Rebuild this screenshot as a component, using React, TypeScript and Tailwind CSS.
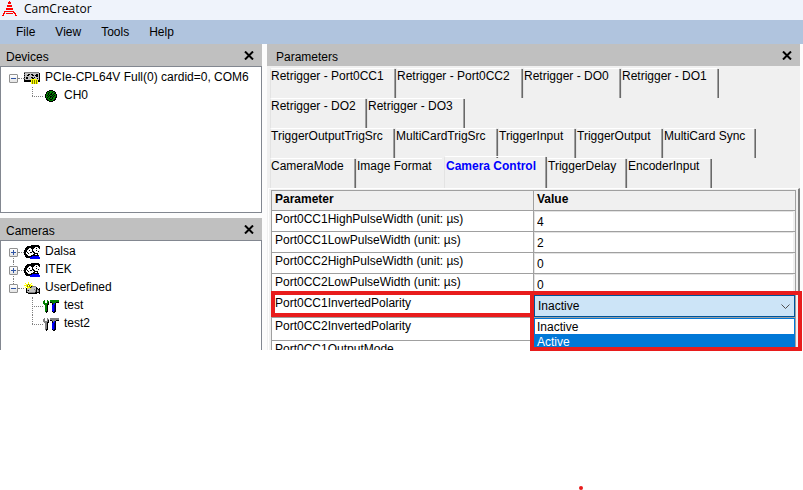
import { useState, type ReactNode } from "react";

const FONT = "font-['Liberation_Sans',Arial,sans-serif]";

const COLORS: Record<string, string> = {
  k: "#000000",
  d: "#404040",
  g: "#808080",
  l: "#c0c0c0",
  w: "#ffffff",
  y: "#ffff00",
  o: "#808000",
  b: "#0000ff",
  n: "#000080",
  e: "#008000",
  r: "#ff0000",
};

function Pixels({ rows, className = "" }: { rows: string[]; className?: string }) {
  return (
    <svg
      width={rows[0].length}
      height={rows.length}
      viewBox={`0 0 ${rows[0].length} ${rows.length}`}
      shapeRendering="crispEdges"
      className={`shrink-0 ${className}`}
      aria-hidden="true"
    >
      {rows.flatMap((row, y) =>
        row.split("").map((c, x) =>
          COLORS[c] ? <rect key={`${x}-${y}`} x={x} y={y} width={1} height={1} fill={COLORS[c]} /> : null,
        ),
      )}
    </svg>
  );
}

const LOGO = [
  ".......r........",
  "......rrr.......",
  "......rrr.......",
  "................",
  ".....rrrrr......",
  ".....rrrrr......",
  "................",
  "....rrrrrrr.....",
  "....rrrrrrr.....",
  "................",
  "..rrrrrrrrrr....",
  "..r........rr...",
  ".rr.rrrrrrr.rr..",
  ".r...........r..",
  "rr...........rr.",
];

const BOARD = [
  "ggggggggggggggg.",
  "kllllllllllllllk",
  "glllkklkklllkklk",
  "kllkklllkklkkklk",
  "glllllllllllkklk",
  "klkklllkklkllllk",
  "glkkllllkklllklk",
  "kllllllyyyyyyllk",
  "kkkkkkkyoyoyoykk",
  "kkkkkkkyoyoyoykk",
  ".......yoyoyoy..",
  ".......yoyoyoy..",
];

const HEADS = [
  ".......kkkkkkkk.",
  "...kkkkkkkkkkkkk",
  "..kkkkkkkkkwwwkk",
  ".kkkkwwkkkwwkwwk",
  ".kkkwwwwkwwwwww.",
  "kkkwwkwwkwwwkww.",
  "kkkwwwwwkkwwwwk.",
  "kkwkwwkkwkkwww..",
  "kkwwkwwwwwkkkk..",
  "kkkwwwwwwkkwwk..",
  ".kkkwwwkkkkkkkk.",
  ".kkkkkkkbbbbbbb.",
  "..kkkkbbbbbbbbbb",
  "......bbbbbbbbbb",
];

const CAMCORDER = [
  "....y...........",
  ".y..y..y........",
  "..yyoyy.........",
  "yyyowoyyy.......",
  "..yoyoykgggg....",
  ".y.yyykgllllk...",
  "..kyllylllllkk.k",
  "..klllllllglkgkk",
  "..kgkllllllgklgk",
  "..kllllllllgklgk",
  "..kkgggggggkkkkk",
  "....kkkkkkkkk..k",
];

const TOOLS_GREEN = [
  ".e..e..eeeeeeeee",
  "ee..ee.eeeeeeeee",
  "ee..ek.kkeeeekkk",
  "eeeeek...kebk...",
  ".eeekk...kbbk...",
  "..eek....bbnk...",
  "..eek....bbnk...",
  "..eek....bbnk...",
  "..eek....bbnk...",
  "..eek....bbnk...",
  "..eek....bbnk...",
  "..ekk....kbkk...",
  "...k......kk....",
];

const TOOLS_GREY = TOOLS_GREEN.map((row) => row.replace(/e/g, "g"));

const CHANNEL = [
  "....kkkk....",
  "..kkeeeekk..",
  ".keekeekeek.",
  ".kekeekeekk.",
  "keekekkekeek",
  "kekekeekekek",
  "keekekkekeek",
  "kekeekekeekk",
  ".keekeekeek.",
  ".kkeekkeekk.",
  "..kkeeeekk..",
  "....kkkk....",
];

function Expander({ open }: { open: boolean }) {
  return (
    <button
      type="button"
      aria-label={open ? "Collapse" : "Expand"}
      className="relative h-[9px] w-[9px] shrink-0 rounded-[1px] border border-[#919191] bg-gradient-to-b from-white to-[#e4e4e4]"
    >
      <span className="absolute top-[3px] left-px h-px w-[5px] bg-[#3055a5]" />
      {!open && <span className="absolute top-px left-[3px] h-[5px] w-px bg-[#3055a5]" />}
    </button>
  );
}

function Branch({ open, icon, label, line = "" }: { open: boolean; icon: string[]; label: string; line?: string }) {
  return (
    <div className="relative flex h-[18px] items-center pl-2">
      {line && <span className={`absolute left-3 border-l border-dotted border-[#808080] ${line}`} />}
      <Expander open={open} />
      <span className="w-[6px] shrink-0 border-t border-dotted border-[#808080]" />
      <Pixels rows={icon} />
      <span className="pb-[2px] pl-[5px] whitespace-nowrap">{label}</span>
    </div>
  );
}

function Leaf({ icon, label, last = true }: { icon: string[]; label: string; last?: boolean }) {
  return (
    <div className="relative flex h-[18px] items-center pl-[31px]">
      <span
        className={`absolute top-0 left-[31px] border-l border-dotted border-[#808080] ${last ? "h-[9px]" : "h-[18px]"}`}
      />
      <span className="w-[11px] shrink-0 border-t border-dotted border-[#808080]" />
      <span className="flex w-4 shrink-0 justify-center">
        <Pixels rows={icon} />
      </span>
      <span className="pb-[2px] pl-[5px] whitespace-nowrap">{label}</span>
    </div>
  );
}

function PanelHeader({ title, pad = "pl-[6px]" }: { title: string; pad?: string }) {
  return (
    <header className={`flex h-[22px] shrink-0 items-center justify-between bg-[#c0c0c0] pr-2 ${pad}`}>
      <h2 className="pt-[3px]">{title}</h2>
      <button
        type="button"
        aria-label={`Close ${title}`}
        className="flex h-[11px] w-[11px] items-center justify-center"
      >
        <svg width="10" height="9" viewBox="0 0 10 9" aria-hidden="true">
          <path d="M1 0.5 L9 8.5 M9 0.5 L1 8.5" stroke="#000" strokeWidth="2" />
        </svg>
      </button>
    </header>
  );
}

const TAB_ROWS: { label: string; width: string }[][] = [
  [
    { label: "Retrigger - Port0CC1", width: "w-[126px]" },
    { label: "Retrigger - Port0CC2", width: "w-[127px]" },
    { label: "Retrigger - DO0", width: "w-[98px]" },
    { label: "Retrigger - DO1", width: "w-[98px]" },
  ],
  [
    { label: "Retrigger - DO2", width: "w-[97px]" },
    { label: "Retrigger - DO3", width: "w-[98px]" },
  ],
  [
    { label: "TriggerOutputTrigSrc", width: "w-[125px]" },
    { label: "MultiCardTrigSrc", width: "w-[103px]" },
    { label: "TriggerInput", width: "w-[78px]" },
    { label: "TriggerOutput", width: "w-[87px]" },
    { label: "MultiCard Sync", width: "w-[93px]" },
  ],
  [
    { label: "CameraMode", width: "w-[86px]" },
    { label: "Image Format", width: "w-[88px]" },
    { label: "Camera Control", width: "w-[103px]" },
    { label: "TriggerDelay", width: "w-[80px]" },
    { label: "EncoderInput", width: "w-[85px]" },
  ],
];

function Tabs() {
  const [active, setActive] = useState("Camera Control");
  return (
    <div role="tablist" className="pt-[2px] pl-[3px]">
      {TAB_ROWS.map((row, i) => (
        <div key={i} className="flex h-[30px] items-end">
          {row.map(({ label, width }, j) => {
            const selected = label === active;
            const beforeSelected = row[j + 1]?.label === active;
            return (
              <button
                key={label}
                type="button"
                role="tab"
                aria-selected={selected}
                onClick={() => setActive(label)}
                className={`relative flex shrink-0 items-start text-left whitespace-nowrap ${width} ${
                  selected ? "h-8 pt-[2px] pl-[2px] font-bold text-[#0000ff]" : "h-[30px] pl-px"
                }`}
              >
                <span className="absolute inset-y-0 right-[2px] left-0 rounded-tl-[2px] border-t border-l border-t-white border-l-[#e3e3e3]" />
                {!beforeSelected && (
                  <span className="absolute top-px right-0 bottom-0 w-[2px] border-r border-r-[#696969] bg-[#a0a0a0]" />
                )}
                <span className="relative">{label}</span>
              </button>
            );
          })}
        </div>
      ))}
    </div>
  );
}

function ParamRow({
  id,
  name,
  height,
  pad = "pr-[2px]",
  children,
}: {
  id: string;
  name: string;
  height: string;
  pad?: string;
  children: ReactNode;
}) {
  return (
    <tr className={height}>
      <th scope="row" className="border-r border-b border-[#a0a0a0] bg-white pl-[3px] text-left align-top font-normal">
        <label htmlFor={id}>{name}</label>
      </th>
      <td className={`border-r border-b border-[#a0a0a0] align-top ${pad}`}>{children}</td>
    </tr>
  );
}

const PULSES = [
  { id: "cc1-high", name: "Port0CC1HighPulseWidth (unit: µs)", value: "4" },
  { id: "cc1-low", name: "Port0CC1LowPulseWidth (unit: µs)", value: "2" },
  { id: "cc2-high", name: "Port0CC2HighPulseWidth (unit: µs)", value: "0" },
  { id: "cc2-low", name: "Port0CC2LowPulseWidth (unit: µs)", value: "0" },
];

function ParameterTable() {
  return (
    <table className="w-full table-fixed border-separate border-spacing-0 border-t border-l border-[#a0a0a0]">
      <colgroup>
        <col className="w-[262px]" />
        <col />
      </colgroup>
      <thead>
        <tr className="h-5">
          <th className="border-r border-b border-[#a0a0a0] pl-[3px] text-left align-top">Parameter</th>
          <th className="border-r border-b border-[#a0a0a0] pl-[3px] text-left align-top">Value</th>
        </tr>
      </thead>
      <tbody>
        {PULSES.map(({ id, name, value }) => (
          <ParamRow key={id} id={id} name={name} height="h-[21px]">
            <input
              id={id}
              defaultValue={value}
              className="block h-5 w-full border-t border-l border-[#e3e3e3] bg-white pt-px pl-[2px] outline-none"
            />
          </ParamRow>
        ))}
        <ParamRow id="cc1-polarity" name="Port0CC1InvertedPolarity" height="h-[23px]" pad="pr-0">
          <div className="relative">
            <select
              id="cc1-polarity"
              defaultValue="Inactive"
              className="block h-[22px] w-full appearance-none border border-[#005499] bg-[#cce4f7] pl-[3px] outline-none"
            >
              <option>Inactive</option>
              <option>Active</option>
            </select>
            <svg
              width="9"
              height="5"
              viewBox="0 0 9 5"
              className="pointer-events-none absolute top-[9px] right-[5px]"
              aria-hidden="true"
            >
              <path d="M0.5 0.5 L4.5 4.5 L8.5 0.5" fill="none" stroke="#505050" />
            </svg>
            <ul
              role="listbox"
              aria-label="Polarity choices"
              className="absolute top-[23px] left-0 z-10 w-full border border-[#0078d7] bg-white"
            >
              <li role="option" aria-selected="false" className="h-[15px] pl-[2px]">
                Inactive
              </li>
              <li role="option" aria-selected="true" className="h-[15px] bg-[#0078d7] pl-[2px] text-white">
                Active
              </li>
            </ul>
          </div>
        </ParamRow>
        <ParamRow id="cc2-polarity" name="Port0CC2InvertedPolarity" height="h-[23px]">
          <input id="cc2-polarity" className="block h-[22px] w-full bg-white" />
        </ParamRow>
        <ParamRow id="cc1-mode" name="Port0CC1OutputMode" height="h-[23px]">
          <input id="cc1-mode" className="block h-[22px] w-full bg-white" />
        </ParamRow>
      </tbody>
    </table>
  );
}

export default function App() {
  return (
    <div className={`relative flex min-h-screen flex-col bg-white text-[12px] leading-4 text-black ${FONT}`}>
      <div className="flex h-[350px] flex-col overflow-hidden">
        <header className="flex h-5 shrink-0 items-center gap-[6px] bg-[#eff3fb] pl-[2px]">
          <Pixels rows={LOGO} className="mb-1" />
          <h1 className="pb-[2px] font-['Open_Sans','Noto_Sans',sans-serif]">CamCreator</h1>
        </header>
        <nav className="flex h-6 shrink-0 items-center gap-5 bg-[#b0c4de] pl-4">
          <button type="button">File</button>
          <button type="button">View</button>
          <button type="button">Tools</button>
          <button type="button">Help</button>
        </nav>
        <main className="flex min-h-0 flex-1 gap-[5px] bg-[#fcfcfc] pr-[3px]">
          <div className="flex w-[262px] shrink-0 flex-col gap-[5px]">
            <section className="flex flex-col">
              <PanelHeader title="Devices" />
              <div className="h-[147px] border border-[#828790] bg-white pt-[2px]">
                <Branch open icon={BOARD} label="PCIe-CPL64V Full(0) cardid=0, COM6" />
                <Leaf icon={CHANNEL} label="CH0" />
              </div>
            </section>
            <section className="flex min-h-0 flex-1 flex-col">
              <PanelHeader title="Cameras" />
              <div className="flex-1 border border-b-0 border-[#828790] bg-white pt-[2px]">
                <Branch open={false} icon={HEADS} label="Dalsa" line="top-[9px] h-[9px]" />
                <Branch open={false} icon={HEADS} label="ITEK" line="top-0 h-[18px]" />
                <Branch open icon={CAMCORDER} label="UserDefined" line="top-0 h-[9px]" />
                <Leaf icon={TOOLS_GREEN} label="test" last={false} />
                <Leaf icon={TOOLS_GREY} label="test2" />
              </div>
            </section>
          </div>
          <section className="flex min-w-0 flex-1 flex-col bg-[#f0f0f0]">
            <PanelHeader title="Parameters" pad="pl-[9px]" />
            <Tabs />
            <div
              role="tabpanel"
              className="ml-px border-t border-r-2 border-l border-t-white border-r-[#808080] border-l-white pt-px pr-[2px] pl-[2px]"
            >
              <ParameterTable />
            </div>
          </section>
        </main>
      </div>
      <div className="pointer-events-none absolute top-[291px] left-[271px] h-[26px] w-[263px] border-4 border-[#e81c1c]" />
      <div className="pointer-events-none absolute top-[291px] right-px left-[530px] z-20 h-[60px] border-4 border-[#e81c1c]" />
      <div className="flex flex-1 items-end pl-[579px]">
        <span className="h-1 w-1 rounded-full bg-[#e81c1c]" />
      </div>
    </div>
  );
}
